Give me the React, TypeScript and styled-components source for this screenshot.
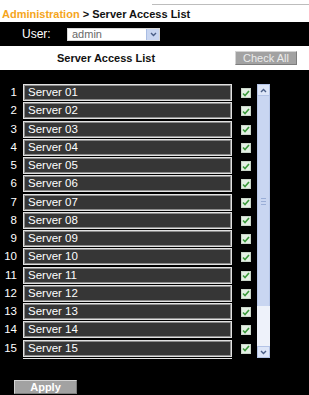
import React from "react";
import styled, { createGlobalStyle } from "styled-components";

const ORANGE = "#f5a51c";
const BTN_GRAY = "#a2a2a2";
const FIELD_DARK = "#363636";
const SCROLL_BLUE = "#c9d6f1";

const GlobalStyle = createGlobalStyle`
  html, body {
    margin: 0;
    padding: 0;
    background: #000;
    font-family: "Liberation Sans", Arial, sans-serif;
  }
`;

const Page = styled.div`
  width: 309px;
  height: 395px;
  background: #000;
  display: flex;
  flex-direction: column;
  overflow: hidden;
`;

const TitleBar = styled.div`
  height: 22px;
  background: #fff;
  display: flex;
  flex-direction: column;
  box-sizing: border-box;
`;

const TopRule = styled.div`
  height: 1px;
  margin: 4px 0 0 152px;
  background: #bdbdbd;
`;

const Title = styled.div`
  font-size: 11px;
  font-weight: 700;
  color: #111;
  padding: 3px 0 0 2px;
  line-height: 13px;
`;

const Crumb = styled.span`
  color: ${ORANGE};
`;

const UserBar = styled.div`
  height: 24px;
  background: #000;
  display: flex;
  align-items: center;
  padding-left: 22px;
`;

const Label = styled.span`
  color: #fff;
  font-size: 12px;
  width: 45px;
`;

const Select = styled.div`
  width: 93px;
  height: 13px;
  background: #fff;
  display: flex;
  align-items: center;
  justify-content: space-between;
  box-sizing: border-box;
  border: 1px solid #d8d8d8;
`;

const SelectText = styled.span`
  color: #6a6a6a;
  font-size: 11px;
  padding-left: 4px;
  line-height: 11px;
`;

const SelectArrow = styled.div`
  width: 12px;
  height: 11px;
  background: ${SCROLL_BLUE};
  border-left: 1px solid #a9bde3;
  display: flex;
  align-items: center;
  justify-content: center;
`;

const ListHead = styled.div`
  height: 24px;
  background: #fff;
  display: flex;
  align-items: center;
  box-sizing: border-box;
  padding: 0 12px 0 57px;
`;

const HeadTitle = styled.span`
  font-size: 11px;
  font-weight: 700;
  color: #111;
  flex: 1;
`;

const GrayButton = styled.button<{ $bold?: boolean }>`
  height: 14px;
  width: ${({ $bold }) => ($bold ? "63px" : "62px")};
  padding: 0;
  background: ${BTN_GRAY};
  border: 1px solid #d4d4d4;
  border-right-color: #7d7d7d;
  border-bottom-color: #7d7d7d;
  color: ${({ $bold }) => ($bold ? "#fff" : "#ececec")};
  font-family: "Liberation Sans", Arial, sans-serif;
  font-size: 11px;
  font-weight: ${({ $bold }) => ($bold ? 700 : 400)};
  line-height: 12px;
`;

const ListArea = styled.div`
  margin-top: 14px;
  display: flex;
  align-items: flex-start;
`;

const Rows = styled.div`
  height: 275px;
  overflow: hidden;
  width: 252px;
`;

const Row = styled.div`
  height: 18.25px;
  display: flex;
  align-items: flex-start;
`;

const Num = styled.span`
  width: 17px;
  text-align: right;
  color: #fff;
  font-size: 11.5px;
  line-height: 17px;
`;

const Field = styled.div`
  margin-left: 6px;
  width: 209px;
  height: 17px;
  box-sizing: border-box;
  background: ${FIELD_DARK};
  border: 1px solid #e2e2e2;
  box-shadow: inset 0 0 0 1px #8c8c8c;
  color: #fff;
  font-size: 11.5px;
  line-height: 15px;
  padding-left: 4px;
`;

const Check = styled.div`
  margin: 4px 0 0 9px;
  width: 10px;
  height: 10px;
  box-sizing: border-box;
  background: #e4f0e4;
  border: 1px solid #c9d6c9;
  display: flex;
  align-items: center;
  justify-content: center;
`;

const Scrollbar = styled.div`
  margin-left: 5px;
  width: 13px;
  height: 274px;
  display: flex;
  flex-direction: column;
  background: #eef2fa;
`;

const ScrollBtn = styled.div`
  height: 12px;
  background: #dde6f8;
  border: 1px solid #b4c4e6;
  display: flex;
  align-items: center;
  justify-content: center;
  box-sizing: border-box;
`;

const Thumb = styled.div`
  height: 210px;
  background: ${SCROLL_BLUE};
  border-left: 1px solid #b7c7e8;
  border-right: 1px solid #b7c7e8;
  box-sizing: border-box;
  display: flex;
  flex-direction: column;
  align-items: center;
  justify-content: center;
  gap: 2px;
`;

const Grip = styled.div`
  width: 5px;
  height: 1px;
  background: #9aaed6;
`;

const Track = styled.div`
  flex: 1;
`;

const Footer = styled.div`
  padding: 18px 0 0 14px;
`;

const Chevron = ({ up }: { up?: boolean }) => (
  <svg width="7" height="5" viewBox="0 0 7 5">
    <path
      d={up ? "M1 4 L3.5 1.5 L6 4" : "M1 1 L3.5 3.5 L6 1"}
      fill="none"
      stroke="#4a5e86"
      strokeWidth="1.4"
    />
  </svg>
);

const Tick = () => (
  <svg width="8" height="7" viewBox="0 0 8 7">
    <path d="M1 3.5 L3 5.5 L7 1" fill="none" stroke="#3c9a3c" strokeWidth="1.6" />
  </svg>
);

const servers = Array.from({ length: 15 }, (_, i) => i + 1);

export default function App() {
  return (
    <Page>
      <GlobalStyle />
      <TitleBar>
        <TopRule />
        <Title>
          <Crumb>Administration</Crumb> &gt; Server Access List
        </Title>
      </TitleBar>
      <UserBar>
        <Label>User:</Label>
        <Select>
          <SelectText>admin</SelectText>
          <SelectArrow>
            <Chevron />
          </SelectArrow>
        </Select>
      </UserBar>
      <ListHead>
        <HeadTitle>Server Access List</HeadTitle>
        <GrayButton type="button">Check All</GrayButton>
      </ListHead>
      <ListArea>
        <Rows>
          {servers.map((n) => (
            <Row key={n}>
              <Num>{n}</Num>
              <Field>Server {n < 10 ? `0${n}` : n}</Field>
              <Check>
                <Tick />
              </Check>
            </Row>
          ))}
          {/* next row peeks in below the fold */}
          <Row>
            <Num />
            <Field />
          </Row>
        </Rows>
        <Scrollbar>
          <ScrollBtn>
            <Chevron up />
          </ScrollBtn>
          <Thumb>
            <Grip />
            <Grip />
            <Grip />
          </Thumb>
          <Track />
          <ScrollBtn>
            <Chevron />
          </ScrollBtn>
        </Scrollbar>
      </ListArea>
      <Footer>
        <GrayButton type="button" $bold>
          Apply
        </GrayButton>
      </Footer>
    </Page>
  );
}
